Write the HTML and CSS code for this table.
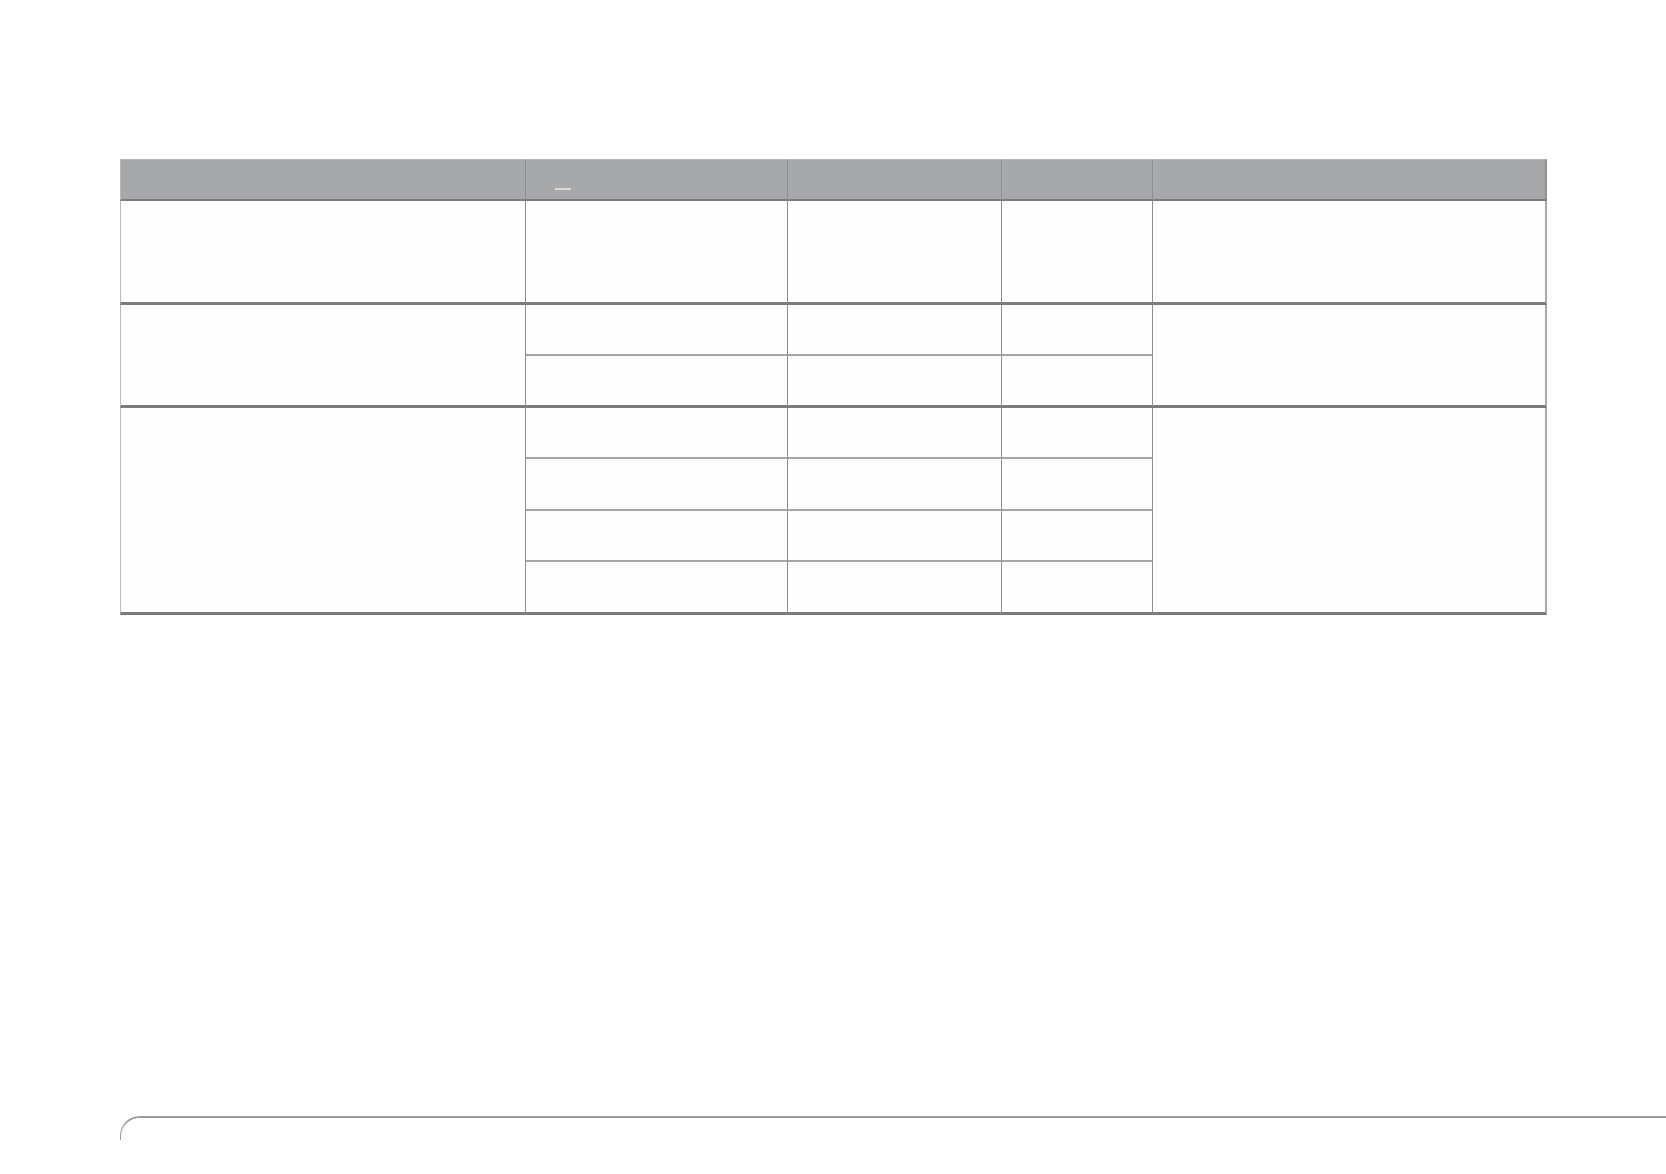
FILE: index.html
```html
<!DOCTYPE html>
<html lang="en">
<head>
<meta charset="utf-8">
<title>Table</title>
<link rel="stylesheet" href="styles.css">
</head>
<body>
<div class="page">
  <table class="grid">
    <colgroup>
      <col class="w1"><col class="w2"><col class="w3"><col class="w4"><col class="w5">
    </colgroup>
    <thead>
      <tr class="r-head">
        <th class="first"></th>
        <th class="dash-cell"><span class="dash"></span></th>
        <th></th>
        <th></th>
        <th class="last"></th>
      </tr>
    </thead>
    <tbody>
      <tr class="r-big">
        <td class="first end"></td>
        <td class="end"></td>
        <td class="end"></td>
        <td class="end"></td>
        <td class="last end"></td>
      </tr>
      <tr class="r-sub">
        <td class="first end" rowspan="2"></td>
        <td class="sub"></td>
        <td class="sub"></td>
        <td class="sub"></td>
        <td class="last end" rowspan="2"></td>
      </tr>
      <tr class="r-sub-end">
        <td class="end"></td>
        <td class="end"></td>
        <td class="end"></td>
      </tr>
      <tr class="r-sub">
        <td class="first end" rowspan="4"></td>
        <td class="sub"></td>
        <td class="sub"></td>
        <td class="sub"></td>
        <td class="last end" rowspan="4"></td>
      </tr>
      <tr class="r-sub-tall">
        <td class="sub"></td>
        <td class="sub"></td>
        <td class="sub"></td>
      </tr>
      <tr class="r-sub">
        <td class="sub"></td>
        <td class="sub"></td>
        <td class="sub"></td>
      </tr>
      <tr class="r-sub-last">
        <td class="end"></td>
        <td class="end"></td>
        <td class="end"></td>
      </tr>
    </tbody>
  </table>
  <div class="footer-rule"></div>
</div>
</body>
</html>
```

FILE: styles.css
```css
html, body {
  margin: 0;
  padding: 0;
  background: #ffffff;
  font-family: "Liberation Sans", Arial, sans-serif;
}

.page {
  padding: 159px 0 0 120px;
  height: 1015px;
  overflow: hidden;
}

.grid {
  border-collapse: separate;
  border-spacing: 0;
  table-layout: fixed;
  width: 1427px;
}

.w1 { width: 406px; }
.w2 { width: 262px; }
.w3 { width: 214px; }
.w4 { width: 151px; }
.w5 { width: 394px; }

.grid th,
.grid td {
  padding: 0;
  border-right: 1px solid #8d8d8f;
  background: #fefefe;
  vertical-align: top;
}

.grid th {
  background: #a7a8aa;
  border-top: 1px solid #b6b7b8;
  border-bottom: 2px solid #7c7c7e;
  border-right-color: #8e8f91;
}

.grid .first {
  border-left: 1px solid #b9b9b9;
}

.grid .last {
  border-right: 2px solid #a9a9a9;
}

.grid th.last {
  border-right: 2px solid #909193;
}

.grid .end {
  border-bottom: 3px solid #7b7b7b;
}

.grid .sub {
  border-bottom: 2px solid #a6a6a6;
}

.r-head { height: 42px; }
.r-big { height: 104px; }
.r-sub { height: 51px; }
.r-sub-tall { height: 52px; }
.r-sub-end { height: 52px; }
.r-sub-last { height: 53px; }

.grid .dash-cell {
  padding: 28px 0 0 29px;
}

.dash {
  display: block;
  width: 16px;
  height: 2px;
  background: #dadadb;
}

.footer-rule {
  margin-top: 501px;
  height: 22px;
  border-top: 2px solid #9a9a9a;
  border-left: 1px solid #9a9a9a;
  border-top-left-radius: 20px;
}
```
